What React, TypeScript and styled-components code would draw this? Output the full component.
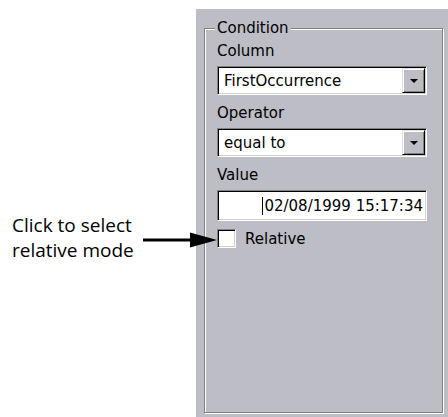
import React from "react";
import styled, { createGlobalStyle } from "styled-components";

const GlobalStyle = createGlobalStyle`
  html, body {
    margin: 0;
    padding: 0;
    background: #fff;
    overflow: hidden;
  }
`;

// face colour of the old dialog (average of the dithered grey)
const face = `background-color: #bdbdc5;`;

const Page = styled.div`
  display: flex;
  width: 448px;
  height: 417px;
`;

const Annotation = styled.div`
  flex: 0 0 196px;
  padding: 213px 0 0 12px;
  box-sizing: border-box;
  position: relative;
  z-index: 1;
`;

const Callout = styled.div`
  display: flex;
  align-items: flex-start;
`;

const Caption = styled.div`
  flex: 0 0 131px;
  font-family: "Open Sans", "Liberation Sans", sans-serif;
  font-size: 19px;
  line-height: 25px;
  color: #000;
  white-space: nowrap;
`;

const Arrow = styled.svg`
  flex: 0 0 74px;
  margin-top: 19px;
  margin-right: -21px;
`;

const Panel = styled.div`
  flex: 1;
  margin-top: 9px;
  padding: 9px 5px 4px 8px;
  box-sizing: border-box;
  display: flex;
  ${face}
`;

const GroupBox = styled.fieldset`
  flex: 1;
  margin: 0;
  padding: 3px 15px 0 12px;
  border: 1px solid #808080;
  box-shadow: inset 1px 1px 0 #fff, 1px 1px 0 #fff;
  font-family: "DejaVu Sans", sans-serif;
  font-size: 15px;
  color: #000;
  display: flex;
  flex-direction: column;
  gap: 8px;
`;

const Legend = styled.legend`
  padding: 0 2px;
  margin-left: -2px;
  line-height: 20px;
  ${face}
`;

const Field = styled.div`
  display: flex;
  flex-direction: column;
  gap: 5px;
`;

const Label = styled.div`
  line-height: 20px;
`;

const Sunken = styled.div<{ $h: number }>`
  height: ${(p) => p.$h}px;
  box-sizing: border-box;
  display: flex;
  align-items: center;
  background: #fff;
  border: 1px solid;
  border-color: #808080 #fff #fff #808080;
  box-shadow: inset 1px 1px 0 #000, inset -1px -1px 0 #d4d0c8;
  padding: 1px;
`;

const ComboText = styled.span`
  flex: 1;
  padding-left: 5px;
  white-space: nowrap;
`;

const DropButton = styled.div`
  flex: 0 0 23px;
  align-self: stretch;
  box-sizing: border-box;
  display: flex;
  align-items: center;
  justify-content: center;
  border: 1px solid;
  border-color: #e4e4e4 #000 #000 #e4e4e4;
  box-shadow: inset 1px 1px 0 #fff, inset -1px -1px 0 #808080;
  ${face}
`;

const Triangle = styled.span`
  width: 0;
  height: 0;
  border-left: 4px solid transparent;
  border-right: 4px solid transparent;
  border-top: 4px solid #000;
`;

const ValueText = styled.span`
  flex: 1;
  display: flex;
  align-items: center;
  justify-content: flex-end;
  padding-right: 2px;
  white-space: nowrap;
`;

const Caret = styled.span`
  width: 1px;
  height: 18px;
  background: #000;
  margin-right: 1px;
`;

const CheckRow = styled.label`
  display: flex;
  align-items: center;
  gap: 9px;
  height: 19px;
`;

const CheckBox = styled.span`
  width: 19px;
  height: 19px;
  box-sizing: border-box;
  background: #fff;
  border: 1px solid;
  border-color: #808080 #fff #fff #808080;
  box-shadow: inset 1px 1px 0 #000, inset -1px -1px 0 #d4d0c8;
`;

function Combo({ value }: { value: string }) {
  return (
    <Sunken $h={29}>
      <ComboText>{value}</ComboText>
      <DropButton>
        <Triangle />
      </DropButton>
    </Sunken>
  );
}

export default function App() {
  return (
    <>
      <GlobalStyle />
      <Page>
        <Annotation>
          <Callout>
            <Caption>
              Click to select
              <br />
              relative mode
            </Caption>
            <Arrow width="74" height="16" viewBox="0 0 74 16">
              <rect x="0" y="6.5" width="50" height="3" fill="#000" />
              <polygon points="47,0.5 74,8 47,15.5" fill="#000" />
            </Arrow>
          </Callout>
        </Annotation>

        <Panel>
          <GroupBox>
            <Legend>Condition</Legend>
            <Field>
              <Label>Column</Label>
              <Combo value="FirstOccurrence" />
            </Field>
            <Field>
              <Label>Operator</Label>
              <Combo value="equal to" />
            </Field>
            <Field>
              <Label>Value</Label>
              <Sunken $h={31}>
                <ValueText>
                  <Caret />
                  02/08/1999 15:17:34
                </ValueText>
              </Sunken>
            </Field>
            <CheckRow>
              <CheckBox />
              Relative
            </CheckRow>
          </GroupBox>
        </Panel>
      </Page>
    </>
  );
}
